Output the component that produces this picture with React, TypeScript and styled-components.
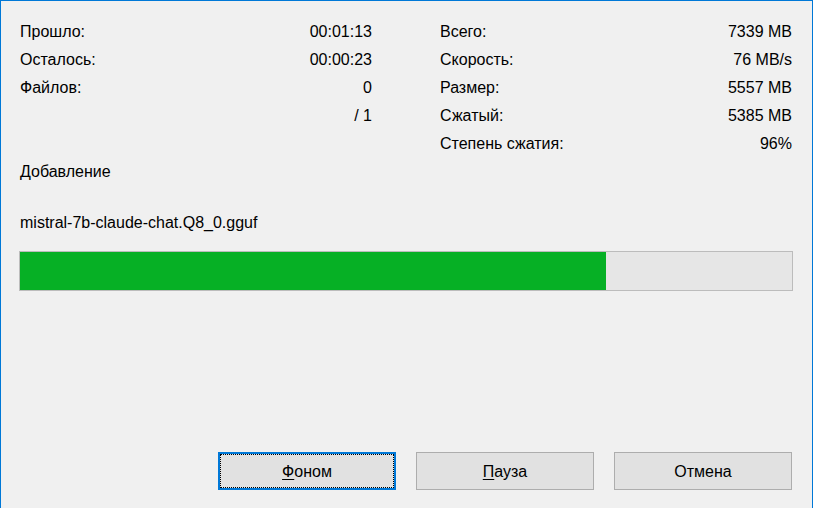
import React from "react";
import styled, { createGlobalStyle } from "styled-components";

const Global = createGlobalStyle`
  html, body { margin: 0; padding: 0; background: #f0f0f0; }
  body { font-family: "Liberation Sans", Arial, sans-serif; font-size: 16px; color: #000; }
  #root { width: 813px; height: 508px; }
`;

const Window = styled.div`
  box-sizing: border-box;
  width: 813px;
  height: 508px;
  background: #f0f0f0;
  border-top: 1px solid #0078d7;
  border-left: 1px solid #0078d7;
  border-right: 1px solid #0078d7;
  padding: 17px 19px 18px 18px;
  display: flex;
  flex-direction: column;
`;

const Stats = styled.div`
  display: grid;
  grid-template-columns: 354px 354px;
  column-gap: 66px;
`;

const Column = styled.div`
  display: flex;
  flex-direction: column;
`;

const Row = styled.div`
  height: 28px;
  display: flex;
  align-items: center;
  justify-content: space-between;
  padding: 0 1px;
  white-space: nowrap;
`;

const Label = styled.span``;
const Value = styled.span`
  text-align: right;
`;

const Line = styled.div<{ $top?: number }>`
  height: 28px;
  display: flex;
  align-items: center;
  padding: 0 1px;
  margin-top: ${(p) => p.$top ?? 0}px;
  white-space: nowrap;
`;

const Track = styled.div`
  box-sizing: border-box;
  margin-top: 14px;
  height: 40px;
  width: 774px;
  border: 1px solid #bcbcbc;
  background: #e6e6e6;
`;

const Fill = styled.div`
  height: 100%;
  background: #06b025;
`;

const Buttons = styled.div`
  margin-top: auto;
  display: flex;
  justify-content: flex-end;
  gap: 20px;
  padding-right: 1px;
`;

const Button = styled.button<{ $focused?: boolean }>`
  box-sizing: border-box;
  width: 178px;
  height: 38px;
  background: #e1e1e1;
  border: ${(p) => (p.$focused ? "2px solid #0078d7" : "1px solid #adadad")};
  font-family: "Liberation Sans", Arial, sans-serif;
  font-size: 16px;
  color: #000;
  padding: 2px 0 0;
  display: flex;
  align-items: center;
  justify-content: center;
  outline: ${(p) => (p.$focused ? "1px dotted #000" : "none")};
  outline-offset: -3px;
`;

const Mnemonic = styled.span`
  text-decoration: underline;
  text-underline-offset: 2px;
`;

const leftRows: [string, string][] = [
  ["Прошло:", "00:01:13"],
  ["Осталось:", "00:00:23"],
  ["Файлов:", "0"],
  ["", "/ 1"],
];

const rightRows: [string, string][] = [
  ["Всего:", "7339 MB"],
  ["Скорость:", "76 MB/s"],
  ["Размер:", "5557 MB"],
  ["Сжатый:", "5385 MB"],
  ["Степень сжатия:", "96%"],
];

export default function App() {
  const progress = 586 / 772;
  return (
    <>
      <Global />
      <Window>
        <Stats>
          <Column>
            {leftRows.map(([l, v], i) => (
              <Row key={i}>
                <Label>{l}</Label>
                <Value>{v}</Value>
              </Row>
            ))}
          </Column>
          <Column>
            {rightRows.map(([l, v], i) => (
              <Row key={i}>
                <Label>{l}</Label>
                <Value>{v}</Value>
              </Row>
            ))}
          </Column>
        </Stats>
        <Line>Добавление</Line>
        <Line $top={23}>mistral-7b-claude-chat.Q8_0.gguf</Line>
        <Track>
          <Fill style={{ width: `${progress * 100}%` }} />
        </Track>
        <Buttons>
          <Button $focused>
            <span>
              <Mnemonic>Ф</Mnemonic>оном
            </span>
          </Button>
          <Button>
            <span>
              <Mnemonic>П</Mnemonic>ауза
            </span>
          </Button>
          <Button>Отмена</Button>
        </Buttons>
      </Window>
    </>
  );
}
